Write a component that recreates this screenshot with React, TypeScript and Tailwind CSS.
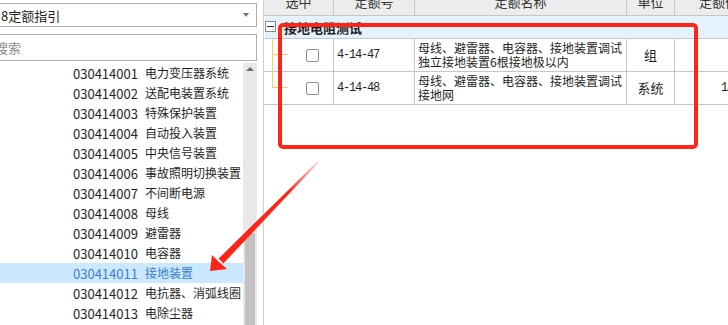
const items = [
  ["030414001", "电力变压器系统"],
  ["030414002", "送配电装置系统"],
  ["030414003", "特殊保护装置"],
  ["030414004", "自动投入装置"],
  ["030414005", "中央信号装置"],
  ["030414006", "事故照明切换装置"],
  ["030414007", "不间断电源"],
  ["030414008", "母线"],
  ["030414009", "避雷器"],
  ["030414010", "电容器"],
  ["030414011", "接地装置"],
  ["030414012", "电抗器、消弧线圈"],
  ["030414013", "电除尘器"],
];

const rows = [
  { code: "4-14-47", name: ["母线、避雷器、电容器、接地装置调试", "独立接地装置6根接地极以内"], unit: "组", price: "", last: false },
  { code: "4-14-48", name: ["母线、避雷器、电容器、接地装置调试", "接地网"], unit: "系统", price: "18", last: true },
];

const cols = "grid grid-cols-[70px_81px_212px_48px_1fr]";

export default function App() {
  return (
    <div className="relative flex w-[728px] h-[325px] overflow-hidden bg-white text-[#1f1f1f] font-['Noto_Sans_CJK_SC','Noto_Sans',sans-serif]">
      {/* left: guide tree */}
      <div className="flex flex-col w-[263px] shrink-0">
        <div className="mt-[3px] -ml-px w-[258px] h-[24px] border border-[#adadad] flex items-center justify-between pr-[7px]">
          <span className="text-[13px] leading-none pl-px">8定额指引</span>
          <span className="w-0 h-0 border-x-[3.5px] border-x-transparent border-t-[4px] border-t-[#777]" />
        </div>
        <div className="mt-[7px] -ml-px w-[258px] h-[27px] border border-[#adadad] flex items-center">
          <span className="text-[13px] leading-none text-[#8c8c8c] -ml-[5px]">搜索</span>
        </div>
        <div className="mt-[2px] flex flex-1 min-h-0">
          <div className="w-[243px] flex flex-col">
            {items.map(([code, name]) => {
              const sel = code === "030414011";
              return (
                <div
                  key={code}
                  className={`h-[20px] shrink-0 flex items-center leading-none ${sel ? "bg-[#cce8ff] text-[#3b7fd4]" : ""}`}
                >
                  <span className="pl-[73px] w-[145px] shrink-0 text-[13px]">{code}</span>
                  <span className="whitespace-nowrap text-[12px]">{name}</span>
                </div>
              );
            })}
          </div>
          <div className="w-[14px] bg-[#e8e8e8] flex flex-col items-center">
            <span className="mt-[4px] w-0 h-0 border-x-[4px] border-x-transparent border-b-[4px] border-b-[#6a6a6a]" />
            <div className="mt-auto w-[10px] h-[92px] bg-[#c1c1c1]" />
          </div>
        </div>
      </div>

      {/* right: quota table */}
      <div className="flex-1 border-l border-[#cfcfcf] flex flex-col text-[12px]">
        <div className={`${cols} h-[16px] bg-[#ececec] border-b border-[#c6c6c6] overflow-hidden text-[#333]`}>
          {["选中", "定额号", "定额名称", "单位", "定额价"].map((h, i) => (
            <div key={h} className={`flex items-start whitespace-nowrap leading-[8px] -mt-[2px] ${i < 4 ? "justify-center border-r border-[#c6c6c6]" : "justify-start pl-[24px]"}`}>
              <span className="text-[13px]">{h}</span>
            </div>
          ))}
        </div>
        <div className="ml-px h-[23px] bg-[#e5f2fc] border-b border-[#c6c6c6] flex items-center">
          <div className="w-[11px] h-[11px] border border-[#8a8a8a] bg-white flex items-center justify-center -mt-[2px]">
            <div className="w-[7px] h-px bg-[#333]" />
          </div>
          <span className="ml-[8px] text-[13px] font-bold leading-none">接地电阻测试</span>
        </div>
        {rows.map((r) => (
          <div key={r.code} className={`${cols} h-[33px] border-b border-[#c6c6c6]`}>
            <div className="border-r border-[#c6c6c6] flex items-stretch">
              <div className="ml-[8px] w-[16px] flex flex-col">
                <div className="h-1/2 border-l border-b border-[#ffc86a]" />
                <div className={`h-1/2 ${r.last ? "" : "border-l border-[#ffc86a]"}`} />
              </div>
              <div className="ml-[18px] self-center w-[13px] h-[13px] rounded-[2px] border border-[#8e8e8e] bg-white" />
            </div>
            <div className="border-r border-[#c6c6c6] flex items-center pl-[3px] font-['Liberation_Mono',monospace] tracking-[-1.2px]">
              {r.code}
            </div>
            <div className="border-r border-[#c6c6c6] pl-[3px] pt-[2px] leading-[14px] whitespace-nowrap overflow-hidden">
              <div>{r.name[0]}</div>
              <div>{r.name[1]}</div>
            </div>
            <div className="border-r border-[#c6c6c6] flex items-center justify-center text-[13px]">{r.unit}</div>
            <div className="flex items-center overflow-hidden">
              <span className="ml-[46px] font-['Liberation_Mono',monospace] tracking-[-1.2px]">{r.price}</span>
            </div>
          </div>
        ))}
      </div>

      {/* annotation: red box and arrow */}
      <div className="absolute left-[278px] top-[23px] w-[420px] h-[126px] border-[4px] border-[#ff2418] rounded-[5px]" />
      <svg className="absolute left-0 top-0 pointer-events-none" width="728" height="325">
        <defs>
          <linearGradient id="fade" x1="318" y1="162" x2="220" y2="262" gradientUnits="userSpaceOnUse">
            <stop offset="0" stopColor="#ff2418" stopOpacity="0.2" />
            <stop offset="0.3" stopColor="#ff2418" stopOpacity="1" />
          </linearGradient>
        </defs>
        <polygon points="318.6,162.6 317.4,161.4 218.6,258.6 223.4,263.4" fill="url(#fade)" />
        <polygon points="210,271 212,255 219,262 227,269" fill="#ff2418" />
      </svg>
    </div>
  );
}
